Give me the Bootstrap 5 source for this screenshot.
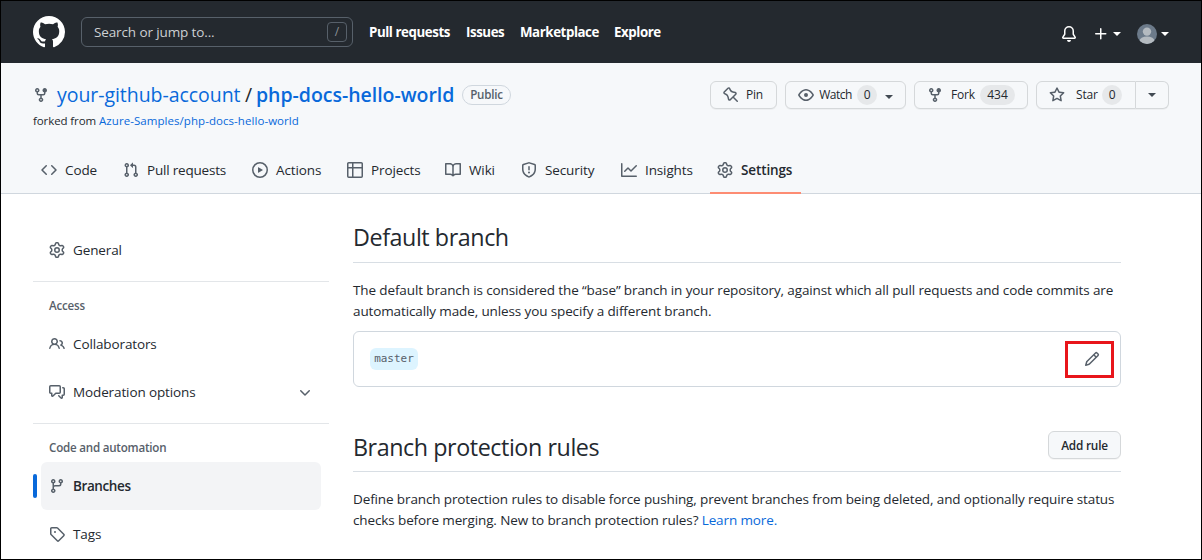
<!DOCTYPE html>
<html lang="en">
<head>
<meta charset="utf-8">
<meta name="viewport" content="width=device-width, initial-scale=1">
<title>Branches · php-docs-hello-world</title>
<link href="https://cdn.jsdelivr.net/npm/bootstrap@5.3.0/dist/css/bootstrap.min.css" rel="stylesheet">
<style>
:root{--ink:#24292f;--muted:#57606a;--line:#d0d7de;--blue:#0969da}
body{font-family:"Open Sans","Noto Sans",sans-serif;font-size:13.5px;line-height:21px;letter-spacing:-.12px;color:var(--ink);height:560px;overflow:hidden;border:1px solid #000;background:#fff}
a{color:var(--blue);text-decoration:none}
svg{fill:currentColor;flex:none;display:block}
.oct{width:16px;height:16px;color:var(--muted)}
.w{display:inline-block;white-space:nowrap}
.topbar{height:62px;background:#24292f;color:#fff;padding:0 32px}
.searchbox{width:272px;height:30px;border:1px solid #57606a;border-radius:6px;padding:0 5px 0 12px;margin:0 16px;color:#cdd0d3}
.slash{width:20px;height:20px;border:1px solid #57606a;border-radius:4px;color:#8b9198;font-size:12px;line-height:18px;text-align:center}
.topnav{gap:16px;font-weight:700;font-size:13.3px;letter-spacing:-.43px;padding-top:1px}
.topnav a{color:#fff}
.tri{width:0;height:0;border:4px solid transparent;border-top-color:currentColor;border-bottom:0}
.gbtn .tri{color:#424a53}
.repohead{height:131px;background:#f6f8fa;border-bottom:1px solid var(--line);padding:18px 32px 0}
.repotitle{font-size:19.5px;line-height:28px;height:28px}
.pill{width:49px;height:20px;border:1px solid var(--line);border-radius:10px;font-size:11.6px;line-height:18px;color:var(--muted);text-align:center;font-weight:600;letter-spacing:-.2px;margin-left:8px}
.forked{font-size:11.5px;line-height:18px;margin-top:3px;letter-spacing:-.05px}
.gbtn{height:28px;border:1px solid #d5d8da;border-radius:6px;background:#f6f8fa;font-size:12px;line-height:20px;font-weight:500;letter-spacing:-.2px;color:var(--ink);box-shadow:0 1px 0 rgba(27,31,36,.04);padding:0 12px}
.cnt{height:20px;border-radius:10px;background:#e6e8ea;font-size:12px;line-height:20px;padding:0 6px;text-align:center}
.tabs{height:48px;padding:0 0 0 8px;margin-top:16px}
.tabs a{color:var(--ink);height:48px;gap:8px;margin-right:24px}
.tabs a.on{font-weight:600;margin-left:-8px;margin-right:0;padding:0 8px 0 7px;border-bottom:2px solid #fd8c73;padding-top:2px}
.side{width:296px;padding-top:32px}
.side a{height:48px;margin:0 8px;padding:0 8px;gap:8px;color:var(--ink);border-radius:6px;position:relative}
.side a.on{background:#f3f4f6;font-weight:600;letter-spacing:-.4px}
.side a.on::before{content:"";position:absolute;left:-8px;top:12px;width:4px;height:24px;border-radius:6px;background:var(--blue)}
.side hr{margin:7px 0 0;border:0;border-top:1px solid #e3e6e9;opacity:1}
.lab{font-size:11.6px;line-height:18px;font-weight:600;letter-spacing:-.22px;color:var(--muted);padding:15px 16px 5px}
.maincol{width:768px;padding-top:21px}
.maincol h2{font-size:23.3px;line-height:32px;font-weight:400;letter-spacing:-.43px;margin:0}
.sec{border-bottom:1px solid #d8dee4;height:48px;padding-top:6px}
.sec.second{margin-top:37px;padding-top:7px}
.maincol p{margin:17px -8px 0 0;white-space:nowrap}
.branchbox{height:56px;border:1px solid var(--line);border-radius:6px;margin-top:9px;padding:0 6px 0 16px}
.bname{height:22px;width:48px;background:#ddf4ff;border-radius:6px;color:var(--muted);font:11px/21px "DejaVu Sans Mono","Liberation Mono",monospace;letter-spacing:0;text-align:center}
.mark-red{width:49px;height:37px;border:3px solid #e8151b;padding-left:16px}
/* text run widths of the header, tabs and buttons */
#n1{width:81px}#n2{width:38px}#n3{width:78px}#n4{width:48px}
#t1{width:184px;letter-spacing:-.05px}#t2{width:15px}#t3{width:198px;letter-spacing:-.03px}
#f1{width:66px;letter-spacing:-.1px}#f2{letter-spacing:.06px}
#a1{width:34px}#a2{width:81px;letter-spacing:-.2px}#a3{width:47px}#a4{width:50px}#a5{width:28px}#a6{width:52px}#a7{width:49px}#a8{width:52px}
#b1{width:67px}#b2{width:121px}#b3{width:114px}#b4{width:100px}#b5{width:33px}
#b1 .w{margin-left:7px}
#b2 .w{width:35px;margin:0 4px 0 4px;letter-spacing:-.5px}#b3 .w{width:24px;margin:0 5px 0 8px}#b4 .w{width:21px;margin:0 5px 0 11px}
#b2 .cnt,#b4 .cnt{width:20px}#b3 .cnt{width:35px;letter-spacing:0}
#addr{width:73px;font-weight:600;font-size:11.8px}
</style>
</head>
<body>
<svg class="d-none" xmlns="http://www.w3.org/2000/svg">
<symbol id="fork" viewBox="0 0 16 16"><path d="M5 3.25a.75.75 0 11-1.5 0 .75.75 0 011.5 0zm0 2.122a2.25 2.25 0 10-1.5 0v.878A2.25 2.25 0 005.75 8.5h1.5v2.128a2.251 2.251 0 101.5 0V8.5h1.5a2.25 2.25 0 002.25-2.25v-.878a2.25 2.25 0 10-1.5 0v.878a.75.75 0 01-.75.75h-4.5A.75.75 0 015 6.25v-.878zm3.75 7.378a.75.75 0 11-1.5 0 .75.75 0 011.5 0zm3-8.75a.75.75 0 100-1.5.75.75 0 000 1.5z"/></symbol>
<symbol id="gear" viewBox="0 0 16 16"><path fill-rule="evenodd" d="M7.429 1.525a6.593 6.593 0 011.142 0c.036.003.108.036.137.146l.289 1.105c.147.56.55.967.997 1.189.174.086.341.183.501.29.417.278.97.423 1.53.27l1.102-.303c.11-.03.175.016.195.046.219.31.41.641.573.989.014.031.022.11-.059.19l-.815.806c-.411.406-.562.957-.53 1.456a4.588 4.588 0 010 .582c-.032.499.119 1.05.53 1.456l.815.806c.08.08.073.159.059.19a6.494 6.494 0 01-.573.99c-.02.029-.086.074-.195.045l-1.103-.303c-.559-.153-1.112-.008-1.529.27-.16.107-.327.204-.5.29-.449.222-.851.628-.998 1.189l-.289 1.105c-.029.11-.101.143-.137.146a6.613 6.613 0 01-1.142 0c-.036-.003-.108-.037-.137-.146l-.289-1.105c-.147-.56-.55-.967-.997-1.189a4.502 4.502 0 01-.501-.29c-.417-.278-.97-.423-1.53-.27l-1.102.303c-.11.03-.175-.016-.195-.046a6.492 6.492 0 01-.573-.989c-.014-.031-.022-.11.059-.19l.815-.806c.411-.406.562-.957.53-1.456a4.587 4.587 0 010-.582c.032-.499-.119-1.05-.53-1.456l-.815-.806c-.08-.08-.073-.159-.059-.19a6.44 6.44 0 01.573-.99c.02-.029.086-.075.195-.045l1.103.303c.559.153 1.112.008 1.529-.27.16-.107.327-.204.5-.29.449-.222.851-.628.998-1.189l.289-1.105c.029-.11.101-.143.137-.146zM8 0c-.236 0-.47.01-.701.03-.743.065-1.29.615-1.458 1.261l-.29 1.106c-.017.066-.078.158-.211.224a5.994 5.994 0 00-.668.386c-.123.082-.233.09-.3.071L3.27 2.776c-.644-.177-1.392.02-1.82.63a7.977 7.977 0 00-.704 1.217c-.315.675-.111 1.422.363 1.891l.815.806c.05.048.098.147.088.294a6.084 6.084 0 000 .772c.01.147-.038.246-.088.294l-.815.806c-.474.469-.678 1.216-.363 1.891.2.428.436.835.704 1.218.428.609 1.176.806 1.82.63l1.103-.303c.066-.019.176-.011.299.071.213.143.436.272.668.386.133.066.194.158.212.224l.289 1.106c.169.646.715 1.196 1.458 1.26a8.094 8.094 0 001.402 0c.743-.064 1.29-.614 1.458-1.26l.29-1.106c.017-.066.078-.158.211-.224a5.98 5.98 0 00.668-.386c.123-.082.233-.09.3-.071l1.102.302c.644.177 1.392-.02 1.82-.63.268-.382.505-.789.704-1.217.315-.675.111-1.422-.364-1.891l-.814-.806c-.05-.048-.098-.147-.088-.294a6.1 6.1 0 000-.772c-.01-.147.039-.246.088-.294l.814-.806c.475-.469.679-1.216.364-1.891a7.992 7.992 0 00-.704-1.218c-.428-.609-1.176-.806-1.82-.63l-1.103.303c-.066.019-.176.011-.299-.071a5.991 5.991 0 00-.668-.386c-.133-.066-.194-.158-.212-.224L10.16 1.29C9.99.645 9.444.095 8.701.031A8.094 8.094 0 008 0zm1.5 8a1.5 1.5 0 11-3 0 1.5 1.5 0 013 0zM11 8a3 3 0 11-6 0 3 3 0 016 0z"/></symbol>
</svg>

<header class="topbar d-flex align-items-center">
  <svg width="32" height="32" viewBox="0 0 16 16"><path d="M8 0C3.58 0 0 3.58 0 8c0 3.54 2.29 6.53 5.47 7.59.4.07.55-.17.55-.38 0-.19-.01-.82-.01-1.49-2.01.37-2.53-.49-2.69-.94-.09-.23-.48-.94-.82-1.13-.28-.15-.68-.52-.01-.53.63-.01 1.08.58 1.23.82.72 1.21 1.87.87 2.33.66.07-.52.28-.87.51-1.07-1.78-.2-3.64-.89-3.64-3.95 0-.87.31-1.59.82-2.15-.08-.2-.36-1.02.08-2.12 0 0 .67-.21 2.2.82.64-.18 1.32-.27 2-.27.68 0 1.36.09 2 .27 1.53-1.04 2.2-.82 2.2-.82.44 1.1.16 1.92.08 2.12.51.56.82 1.27.82 2.15 0 3.07-1.87 3.75-3.65 3.95.29.25.54.73.54 1.48 0 1.07-.01 1.93-.01 2.2 0 .21.15.46.55.38A8.013 8.013 0 0016 8c0-4.42-3.58-8-8-8z"/></svg>
  <div class="searchbox d-flex align-items-center justify-content-between"><span class="w">Search or jump to...</span><span class="slash">/</span></div>
  <nav class="topnav d-flex">
    <a href="#" class="w" id="n1">Pull requests</a><a href="#" class="w" id="n2">Issues</a><a href="#" class="w" id="n3">Marketplace</a><a href="#" class="w" id="n4">Explore</a>
  </nav>
  <div class="ms-auto d-flex align-items-center pt-1">
    <svg width="16" height="16" viewBox="0 0 16 16"><path d="M8 16a2 2 0 001.985-1.75c.017-.137-.097-.25-.235-.25h-3.5c-.138 0-.252.113-.235.25A2 2 0 008 16z"/><path fill-rule="evenodd" d="M8 1.5A3.5 3.5 0 004.5 5v2.947c0 .346-.102.683-.294.97l-1.703 2.556a.018.018 0 00-.003.01l.001.006c0 .002.002.004.004.006a.017.017 0 00.006.004l.007.001h10.964l.007-.001a.016.016 0 00.006-.004.016.016 0 00.004-.006l.001-.007a.017.017 0 00-.003-.01l-1.703-2.554a1.75 1.75 0 01-.294-.97V5A3.5 3.5 0 008 1.5zM3 5a5 5 0 0110 0v2.947c0 .05.015.098.042.139l1.703 2.555A1.518 1.518 0 0113.482 13H2.518a1.518 1.518 0 01-1.263-2.36l1.703-2.554A.25.25 0 003 7.947V5z"/></svg>
    <svg class="ms-3" width="16" height="16" viewBox="0 0 16 16"><path d="M7.75 2a.75.75 0 01.75.75V7h4.25a.75.75 0 110 1.5H8.5v4.25a.75.75 0 11-1.5 0V8.5H2.75a.75.75 0 010-1.5H7V2.75A.75.75 0 017.75 2z"/></svg>
    <span class="tri ms-1"></span>
    <svg class="ms-3" width="20" height="20" viewBox="0 0 20 20"><defs><clipPath id="av"><circle cx="10" cy="10" r="10"/></clipPath></defs><g clip-path="url(#av)"><path fill="#6c7a8a" d="M0 0h20v20H0z"/><circle cx="10" cy="7.6" r="4.2" fill="#b4bac0"/><ellipse cx="10" cy="17" rx="7.5" ry="4.6" fill="#b4bac0"/></g></svg>
    <span class="tri ms-1"></span>
  </div>
</header>

<section class="repohead">
  <div class="d-flex justify-content-between">
    <div>
      <div class="repotitle d-flex align-items-center">
        <svg class="oct me-2"><use href="#fork"/></svg><a href="#" class="w" id="t1">your-github-account</a><span class="w text-center" id="t2">/</span><a href="#" class="w fw-semibold" id="t3">php-docs-hello-world</a><span class="pill">Public</span>
      </div>
      <div class="forked"><span class="w" id="f1">forked from</span><a href="#" class="w" id="f2">Azure-Samples/php-docs-hello-world</a></div>
    </div>
    <div class="d-flex gap-2">
      <button class="gbtn d-flex align-items-center" id="b1"><svg class="oct" viewBox="0 0 16 16"><path fill-rule="evenodd" d="M4.456.734a1.75 1.75 0 012.826.504l.613 1.327a3.081 3.081 0 002.084 1.707l2.454.584c1.332.317 1.8 1.972.832 2.94L11.06 10l3.72 3.72a.75.75 0 11-1.061 1.06L10 11.06l-2.204 2.205c-.968.968-2.623.5-2.94-.832l-.584-2.454a3.081 3.081 0 00-1.707-2.084l-1.327-.613a1.75 1.75 0 01-.504-2.826L4.456.734zM5.92 1.866a.25.25 0 00-.404-.072L1.794 5.516a.25.25 0 00.072.404l1.328.613A4.582 4.582 0 015.73 9.63l.584 2.454a.25.25 0 00.42.12l5.47-5.47a.25.25 0 00-.12-.42L9.63 5.73a4.581 4.581 0 01-3.098-2.537L5.92 1.866z"/></svg><span class="w">Pin</span></button>
      <button class="gbtn d-flex align-items-center" id="b2"><svg class="oct" viewBox="0 0 16 16"><path fill-rule="evenodd" d="M1.679 7.932c.412-.621 1.242-1.75 2.366-2.717C5.175 4.242 6.527 3.5 8 3.5c1.473 0 2.824.742 3.955 1.715 1.124.967 1.954 2.096 2.366 2.717a.119.119 0 010 .136c-.412.621-1.242 1.75-2.366 2.717C10.825 11.758 9.473 12.5 8 12.5c-1.473 0-2.824-.742-3.955-1.715C2.92 9.818 2.09 8.69 1.679 8.068a.119.119 0 010-.136zM8 2c-1.981 0-3.67.992-4.933 2.078C1.797 5.169.88 6.423.43 7.1a1.619 1.619 0 000 1.798c.45.678 1.367 1.932 2.637 3.024C4.329 13.008 6.019 14 8 14c1.981 0 3.67-.992 4.933-2.078 1.27-1.091 2.187-2.345 2.637-3.023a1.619 1.619 0 000-1.798c-.45-.678-1.367-1.932-2.637-3.023C11.671 2.992 9.981 2 8 2zm0 8a2 2 0 100-4 2 2 0 000 4z"/></svg><span class="w">Watch</span><span class="cnt">0</span><span class="tri ms-auto mt-1"></span></button>
      <button class="gbtn d-flex align-items-center" id="b3"><svg class="oct"><use href="#fork"/></svg><span class="w">Fork</span><span class="cnt">434</span></button>
      <div class="d-flex">
        <button class="gbtn d-flex align-items-center rounded-end-0" id="b4"><svg class="oct" viewBox="0 0 16 16"><path fill-rule="evenodd" d="M8 .25a.75.75 0 01.673.418l1.882 3.815 4.21.612a.75.75 0 01.416 1.279l-3.046 2.97.719 4.192a.75.75 0 01-1.088.791L8 12.347l-3.766 1.98a.75.75 0 01-1.088-.79l.72-4.194L.818 6.374a.75.75 0 01.416-1.28l4.21-.611L7.327.668A.75.75 0 018 .25zm0 2.445L6.615 5.5a.75.75 0 01-.564.41l-3.097.45 2.24 2.184a.75.75 0 01.216.664l-.528 3.084 2.769-1.456a.75.75 0 01.698 0l2.77 1.456-.53-3.084a.75.75 0 01.216-.664l2.24-2.183-3.096-.45a.75.75 0 01-.564-.41L8 2.694v.001z"/></svg><span class="w">Star</span><span class="cnt">0</span></button>
        <button class="gbtn d-flex align-items-center justify-content-center rounded-start-0 border-start-0 p-0" id="b5"><span class="tri"></span></button>
      </div>
    </div>
  </div>
  <nav class="tabs d-flex">
    <a href="#" class="d-flex align-items-center"><svg class="oct" viewBox="0 0 16 16"><path fill-rule="evenodd" d="M4.72 3.22a.75.75 0 011.06 1.06L2.06 8l3.72 3.72a.75.75 0 11-1.06 1.06L.47 8.53a.75.75 0 010-1.06l4.25-4.25zm6.56 0a.75.75 0 10-1.06 1.06L13.94 8l-3.72 3.72a.75.75 0 101.06 1.06l4.25-4.25a.75.75 0 000-1.06l-4.25-4.25z"/></svg><span class="w" id="a1">Code</span></a>
    <a href="#" class="d-flex align-items-center"><svg class="oct" viewBox="0 0 16 16"><path fill-rule="evenodd" d="M7.177 3.073L9.573.677A.25.25 0 0110 .854v4.792a.25.25 0 01-.427.177L7.177 3.427a.25.25 0 010-.354zM3.75 2.5a.75.75 0 100 1.5.75.75 0 000-1.5zm-2.25.75a2.25 2.25 0 113 2.122v5.256a2.251 2.251 0 11-1.5 0V5.372A2.25 2.25 0 011.5 3.25zM11 2.5h-1V4h1a1 1 0 011 1v5.628a2.251 2.251 0 101.5 0V5A2.5 2.5 0 0011 2.5zm1 10.25a.75.75 0 111.5 0 .75.75 0 01-1.5 0zM3.75 12a.75.75 0 100 1.5.75.75 0 000-1.5z"/></svg><span class="w" id="a2">Pull requests</span></a>
    <a href="#" class="d-flex align-items-center"><svg class="oct" viewBox="0 0 16 16"><path fill-rule="evenodd" d="M1.5 8a6.5 6.5 0 1113 0 6.5 6.5 0 01-13 0zM8 0a8 8 0 100 16A8 8 0 008 0zM6.379 5.227A.25.25 0 006 5.442v5.117a.25.25 0 00.379.214l4.264-2.559a.25.25 0 000-.428L6.379 5.227z"/></svg><span class="w" id="a3">Actions</span></a>
    <a href="#" class="d-flex align-items-center"><svg class="oct" viewBox="0 0 16 16"><path fill-rule="evenodd" d="M0 1.75C0 .784.784 0 1.75 0h12.5C15.216 0 16 .784 16 1.75v3.585a.746.746 0 010 .83v8.085A1.75 1.75 0 0114.25 16H6.309a.748.748 0 01-1.118 0H1.75A1.75 1.75 0 010 14.25V6.165a.746.746 0 010-.83V1.75zM1.5 6.5v7.75c0 .138.112.25.25.25H5v-8H1.5zM5 5H1.5V1.75a.25.25 0 01.25-.25H5V5zm1.5 1.5v8h7.75a.25.25 0 00.25-.25V6.5h-8zm8-1.5h-8V1.5h7.75a.25.25 0 01.25.25V5z"/></svg><span class="w" id="a4">Projects</span></a>
    <a href="#" class="d-flex align-items-center"><svg class="oct" viewBox="0 0 16 16"><path fill-rule="evenodd" d="M0 1.75A.75.75 0 01.75 1h4.253c1.227 0 2.317.59 3 1.501A3.744 3.744 0 0111.006 1h4.245a.75.75 0 01.75.75v10.5a.75.75 0 01-.75.75h-4.507a2.25 2.25 0 00-1.591.659l-.622.621a.75.75 0 01-1.06 0l-.622-.621A2.25 2.25 0 005.258 13H.75a.75.75 0 01-.75-.75V1.75zm8.755 3a2.25 2.25 0 012.25-2.25H14.5v9h-3.757c-.71 0-1.4.201-1.992.572l.004-7.322zm-1.504 7.324l.004-5.073-.002-2.253A2.25 2.25 0 005.003 2.5H1.5v9h3.757a3.75 3.75 0 011.994.574z"/></svg><span class="w" id="a5">Wiki</span></a>
    <a href="#" class="d-flex align-items-center"><svg class="oct" viewBox="0 0 16 16"><path fill-rule="evenodd" d="M7.467.133a1.75 1.75 0 011.066 0l5.25 1.68A1.75 1.75 0 0115 3.48V7c0 1.566-.32 3.182-1.303 4.682-.983 1.498-2.585 2.813-5.032 3.855a1.7 1.7 0 01-1.33 0c-2.447-1.042-4.049-2.357-5.032-3.855C1.32 10.182 1 8.566 1 7V3.48a1.75 1.75 0 011.217-1.667l5.25-1.68zm.61 1.429a.25.25 0 00-.153 0l-5.25 1.68a.25.25 0 00-.174.238V7c0 1.358.275 2.666 1.057 3.86.784 1.194 2.121 2.34 4.366 3.297a.2.2 0 00.154 0c2.245-.956 3.582-2.104 4.366-3.298C13.225 9.666 13.5 8.36 13.5 7V3.48a.25.25 0 00-.174-.237l-5.25-1.68zM9 10.5a1 1 0 11-2 0 1 1 0 012 0zm-.25-5.75a.75.75 0 10-1.5 0v3a.75.75 0 001.5 0v-3z"/></svg><span class="w" id="a6">Security</span></a>
    <a href="#" class="d-flex align-items-center"><svg class="oct" viewBox="0 0 16 16"><path fill-rule="evenodd" d="M1.5 1.75a.75.75 0 00-1.5 0v12.5c0 .414.336.75.75.75h14.5a.75.75 0 000-1.5H1.5V1.75zm14.28 2.53a.75.75 0 00-1.06-1.06L10 7.94 7.53 5.47a.75.75 0 00-1.06 0L3.22 8.72a.75.75 0 001.06 1.06L7 7.06l2.47 2.47a.75.75 0 001.06 0l5.25-5.25z"/></svg><span class="w" id="a7">Insights</span></a>
    <a href="#" class="on d-flex align-items-center"><svg class="oct"><use href="#gear"/></svg><span class="w" id="a8">Settings</span></a>
  </nav>
</section>

<div class="d-flex gap-4 ps-4 ms-2">
  <aside class="side">
    <a href="#" class="d-flex align-items-center"><svg class="oct"><use href="#gear"/></svg><span class="w">General</span></a>
    <hr>
    <div class="lab">Access</div>
    <a href="#" class="d-flex align-items-center"><svg class="oct" viewBox="0 0 16 16"><path fill-rule="evenodd" d="M5.5 3.5a2 2 0 100 4 2 2 0 000-4zM2 5.5a3.5 3.5 0 115.898 2.549 5.507 5.507 0 013.034 4.084.75.75 0 11-1.482.235 4.001 4.001 0 00-7.9 0 .75.75 0 01-1.482-.236A5.507 5.507 0 013.102 8.05 3.49 3.49 0 012 5.5zM11 4a.75.75 0 100 1.5 1.5 1.5 0 01.666 2.844.75.75 0 00-.416.672v.352a.75.75 0 00.574.73c1.2.289 2.162 1.2 2.522 2.372a.75.75 0 101.434-.44 5.01 5.01 0 00-2.56-3.012A3 3 0 0011 4z"/></svg><span class="w">Collaborators</span></a>
    <a href="#" class="d-flex align-items-center"><svg class="oct" viewBox="0 0 16 16"><path fill-rule="evenodd" d="M1.5 2.75a.25.25 0 01.25-.25h8.5a.25.25 0 01.25.25v5.5a.25.25 0 01-.25.25h-3.5a.75.75 0 00-.53.22L3.5 11.44V9.25a.75.75 0 00-.75-.75h-1a.25.25 0 01-.25-.25v-5.5zM1.75 1A1.75 1.75 0 000 2.75v5.5C0 9.216.784 10 1.75 10H2v1.543a1.457 1.457 0 002.487 1.03L7.061 10h3.189A1.75 1.75 0 0012 8.25v-5.5A1.75 1.75 0 0010.25 1h-8.5zM14.5 4.75a.25.25 0 00-.25-.25h-.5a.75.75 0 110-1.5h.5c.966 0 1.75.784 1.75 1.75v5.5A1.75 1.75 0 0114.25 12H14v1.543a1.457 1.457 0 01-2.487 1.03L9.22 12.28a.75.75 0 111.06-1.06l2.22 2.22v-2.19a.75.75 0 01.75-.75h1a.25.25 0 00.25-.25v-5.5z"/></svg><span class="w">Moderation options</span><svg class="oct ms-auto" viewBox="0 0 16 16"><path fill-rule="evenodd" d="M12.78 6.22a.75.75 0 010 1.06l-4.25 4.25a.75.75 0 01-1.06 0L3.22 7.28a.75.75 0 011.06-1.06L8 9.94l3.72-3.72a.75.75 0 011.06 0z"/></svg></a>
    <hr>
    <div class="lab">Code and automation</div>
    <a href="#" class="on d-flex align-items-center"><svg class="oct" viewBox="0 0 16 16"><path fill-rule="evenodd" d="M11.75 2.5a.75.75 0 100 1.5.75.75 0 000-1.5zm-2.25.75a2.25 2.25 0 113 2.122V6A2.5 2.5 0 0110 8.5H6a1 1 0 00-1 1v1.128a2.251 2.251 0 11-1.5 0V5.372a2.25 2.25 0 111.5 0v1.836A2.492 2.492 0 016 7h4a1 1 0 001-1v-.628A2.25 2.25 0 019.5 3.25zM4.25 12a.75.75 0 100 1.5.75.75 0 000-1.5zM3.5 3.25a.75.75 0 111.5 0 .75.75 0 01-1.5 0z"/></svg><span class="w">Branches</span></a>
    <a href="#" class="d-flex align-items-center"><svg class="oct" viewBox="0 0 16 16"><path fill-rule="evenodd" d="M2.5 7.775V2.75a.25.25 0 01.25-.25h5.025a.25.25 0 01.177.073l6.25 6.25a.25.25 0 010 .354l-5.025 5.025a.25.25 0 01-.354 0l-6.25-6.25a.25.25 0 01-.073-.177zm-1.5 0V2.75C1 1.784 1.784 1 2.75 1h5.025c.464 0 .91.184 1.238.513l6.25 6.25a1.75 1.75 0 010 2.474l-5.026 5.026a1.75 1.75 0 01-2.474 0l-6.25-6.25A1.75 1.75 0 011 7.775zM6 5a1 1 0 100 2 1 1 0 000-2z"/></svg><span class="w">Tags</span></a>
  </aside>
  <main class="maincol">
    <div class="sec"><h2><span class="w">Default branch</span></h2></div>
    <p>The default branch is considered the “base” branch in your repository, against which all pull requests and code commits are<br>automatically made, unless you specify a different branch.</p>
    <div class="branchbox d-flex align-items-center justify-content-between">
      <span class="bname">master</span>
      <span class="mark-red d-flex align-items-center"><svg class="oct" viewBox="0 0 16 16"><path fill-rule="evenodd" d="M11.013 1.427a1.75 1.75 0 012.474 0l1.086 1.086a1.75 1.75 0 010 2.474l-8.61 8.61c-.21.21-.47.364-.756.445l-3.251.93a.75.75 0 01-.927-.928l.929-3.25a1.75 1.75 0 01.445-.758l8.61-8.61zm1.414 1.06a.25.25 0 00-.354 0L10.811 3.75l1.439 1.44 1.263-1.263a.25.25 0 000-.354l-1.086-1.086zM11.189 6.25L9.75 4.81l-6.286 6.287a.25.25 0 00-.064.108l-.558 1.953 1.953-.558a.249.249 0 00.108-.064l6.286-6.286z"/></svg></span>
    </div>
    <div class="sec second d-flex justify-content-between"><h2><span class="w">Branch protection rules</span></h2><button class="gbtn p-0" id="addr">Add rule</button></div>
    <p>Define branch protection rules to disable force pushing, prevent branches from being deleted, and optionally require status<br>checks before merging. New to branch protection rules? <a href="#">Learn more.</a></p>
  </main>
</div>
<script src="https://cdn.jsdelivr.net/npm/bootstrap@5.3.0/dist/js/bootstrap.bundle.min.js"></script>
</body>
</html>
